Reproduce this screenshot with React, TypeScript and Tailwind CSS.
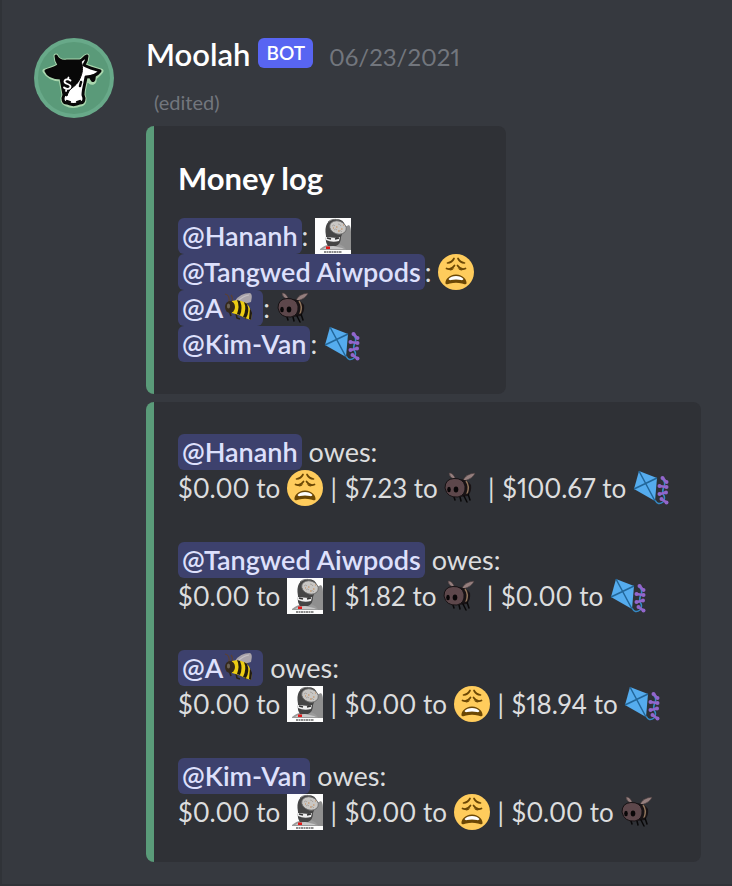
import type { ReactNode } from "react";

function Avatar() {
  return (
    <svg viewBox="0 0 80 80" className="size-20 shrink-0" role="img" aria-label="Moolah avatar">
      <circle cx="40" cy="40" r="40" fill="#68a989" />
      <circle cx="40" cy="40" r="36" fill="#5a9a79" />
      <g strokeLinejoin="round" strokeLinecap="round">
        <path
          d="M22 18 C24 22 28 24 33 23 L46 23 C49 22 50 19 53 18 C53 21 52 24 50 27 C55 30 61 31 67 33 C65 36 62 38 60 40 C61 45 57 46 55 41 L52 40 C51 46 49 51 49 57 C51 61 50 66 46 66 C42 68 36 68 33 66 C29 65 28 61 30 57 C29 51 28 46 27 41 C20 41 14 38 11 33 C17 31 22 30 25 27 C23 24 22 21 22 18Z"
          fill="#a9d6ad"
          stroke="#a9d6ad"
          strokeWidth="5"
        />
        <path
          d="M22 18 C24 22 28 24 33 23 L46 23 C49 22 50 19 53 18 C53 21 52 24 50 27 C55 30 61 31 66 33 C63 37 58 39 52 39 C51 46 49 51 49 57 C51 61 50 65 46 65 C42 67 37 67 33 65 C29 65 28 61 30 57 C29 51 28 46 27 40 C20 40 14 38 12 33 C17 31 22 30 25 27 C23 24 22 21 22 18Z"
          fill="#fff"
          stroke="#080808"
          strokeWidth="3"
        />
        <path
          d="M22 18 C24 22 28 23.500 33 23 L47 23 C49 28 49 33 47 38 C45 44 42 47 38 50 C35 52 34 55 33 58 L30 57 C29 51 28 46 27 40 C20 40 14 38 12 33 C17 31 22 30 25 27 C23 24 22 21 22 18Z"
          fill="#080808"
          stroke="#080808"
          strokeWidth="1"
        />
        <path d="M56 38 L61 37 C61 41 61 44 58 43 C57 42 56 40 56 38Z" fill="#080808" stroke="#080808" strokeWidth="1.500" />
        <path d="M47 44 L46 48" fill="none" stroke="#080808" strokeWidth="2.500" />
        <path d="M33 63 L36 64 M43 64 L46 63" fill="none" stroke="#080808" strokeWidth="2.200" />
        <path
          d="M36.500 42.500 C34.500 40.500 30.500 41 30.500 43.500 C30.500 46.500 36.500 45.500 36.500 48.500 C36.500 51.500 32 51.500 30 49.500 M34.500 39.500 L34 41 M32.500 51 L32 53"
          fill="none"
          stroke="#fff"
          strokeWidth="1.800"
        />
      </g>
    </svg>
  );
}

const emojiClass = "inline-block size-9 align-top";

function Mask() {
  return (
    <svg viewBox="0 0 36 36" className={emojiClass} role="img" aria-label="masked figure">
      <rect width="36" height="36" fill="#fdfdfd" />
      <path d="M27 10 L34 7 Q36 9 36 14 V32 H25 Q22 22 27 10Z" fill="#8f8f8f" />
      <path d="M5 31 Q10 27 13 27 L24 26 Q30 28 31 32 H5Z" fill="#9a9a9a" />
      <path d="M11 18 Q8 2 21 1 Q29 1 30 8 L26 19 Q26 26 21 28 L13 28 Q10 24 11 18Z" fill="#454545" />
      <path d="M13 4 Q17 0 24 2" fill="none" stroke="#777" strokeWidth="1" />
      <ellipse cx="23" cy="9.500" rx="8.500" ry="6.500" transform="rotate(18 23 9.500)" fill="#c9c7c4" stroke="#666" strokeWidth="0.800" />
      <path
        d="M17 8 Q19 6 20 8 M23 6 Q25 6 26 8 M19 12 Q21 10 22 12 M24 13 Q26 12 27 14"
        fill="none"
        stroke="#a19c97"
        strokeWidth="0.800"
      />
      <path d="M21 9h1.500 M26 11h1.500 M23 13h1.500 M28 7h1 M18 10h1" stroke="#c88a52" strokeWidth="1.200" />
      <path d="M11 19 L22 20 L25 19 L24 23 Q17 25 11 22Z" fill="#eee" />
      <path d="M12 20 L16 21 M20 21 L24 20" stroke="#333" strokeWidth="1.400" />
      <path d="M11 29 L18 28 L27 30 L29 31 H8Z" fill="#c7c7c7" />
      <rect x="11" y="28.500" width="4" height="2.500" fill="#e21818" />
      <path d="M9 34h18" stroke="#666" strokeWidth="1.500" strokeDasharray="2 0.500" />
    </svg>
  );
}

function Weary() {
  return (
    <svg viewBox="0 0 36 36" className={emojiClass} role="img" aria-label="weary face">
      <circle cx="18" cy="18" r="18" fill="#ffcc5c" />
      <g fill="none" stroke="#6b4705" strokeWidth="1.700" strokeLinecap="round">
        <path d="M9.500 9 Q14 8.500 16 4.500 M26.500 9 Q22 8.500 20 4.500" />
        <path d="M8.500 14.500 Q13 16.500 16.500 11.500 M27.500 14.500 Q23 16.500 19.500 11.500" />
      </g>
      <path d="M9.500 14.500 Q13 18.500 16.500 14 Q13 16 9.500 14.500Z M26.500 14.500 Q23 18.500 19.500 14 Q23 16 26.500 14.500Z" fill="#6b4705" />
      <path d="M18 20.500 C11 20.500 7 26 7.500 29.500 C8 31 10 30 12 29.500 Q18 28 24 29.500 C26 30 28 31 28.500 29.500 C29 26 25 20.500 18 20.500Z" fill="#6b4705" />
      <path d="M10.500 25 Q13 22 18 22 T25.500 25 Q25 26.500 23 26 Q18 24.800 13 26 Q11 26.500 10.500 25Z" fill="#fff" />
    </svg>
  );
}

function DarkBee() {
  return (
    <svg viewBox="0 0 36 36" className={emojiClass} role="img" aria-label="dark bee">
      <path d="M11 10 Q5 7 5 3 Q9 2 12 10Z" fill="#957f7e" stroke="#443739" strokeWidth="0.600" />
      <path d="M19 10 Q22 4 31 3 Q30 8 20 11Z" fill="#957f7e" stroke="#443739" strokeWidth="0.600" />
      <path d="M15 9 Q23 9 27 15 Q28 21 24 26 L15 27Z" fill="#191315" />
      <path d="M22 11 Q26 16 23 24" fill="none" stroke="#8f745b" strokeWidth="1.500" />
      <path d="M10 27 L11 30 M16 27 L17 31 M20 26 L23 32 M24 24 L26 30" fill="none" stroke="#090809" strokeWidth="1.500" strokeLinecap="round" />
      <path d="M1 18 Q1 9 10 8.500 Q19 8 21 16 Q22 25 14 27 Q3 28 1 18Z" fill="#5d474b" stroke="#171214" strokeWidth="1" />
      <ellipse cx="5" cy="19.500" rx="1.800" ry="2.800" fill="#080607" />
      <ellipse cx="12" cy="19.500" rx="2.300" ry="3" fill="#080607" />
    </svg>
  );
}

function Kite() {
  return (
    <svg viewBox="0 0 36 36" className={emojiClass} role="img" aria-label="kite">
      <path d="M22 30 Q25 36 30 32 Q33 28 30 24 Q29 20 31 17 Q33 12 29 9" fill="none" stroke="#3589c5" strokeWidth="1.500" />
      <path d="M6 1 L24 8 L22 31 L1 19Z" fill="#55acee" />
      <path d="M6 1 L22 31 M24 8 L1 19" fill="none" stroke="#226699" strokeWidth="1.500" />
      <g stroke="#9266cc" strokeWidth="2.600">
        <path d="M30 8 L33 12 M26.500 16 L33 17 M27 24 L33 22.500 M28.500 29 L33.500 32.500" />
      </g>
      <g fill="#9266cc">
        <circle cx="29.500" cy="8" r="2" />
        <circle cx="33.500" cy="12" r="2" />
        <circle cx="26.500" cy="16" r="2" />
        <circle cx="33.500" cy="17" r="2" />
        <circle cx="26.500" cy="24" r="2" />
        <circle cx="33" cy="22.500" r="2" />
        <circle cx="28.500" cy="29" r="2" />
        <circle cx="33.500" cy="32.500" r="2" />
      </g>
    </svg>
  );
}

function Bee() {
  return (
    <svg viewBox="0 0 36 36" className={emojiClass} role="img" aria-label="bee">
      <path d="M6 12 Q7 5 2 4 M9 11 Q10 7 8 5" fill="none" stroke="#5b4034" strokeWidth="1.200" />
      <path d="M12 11 Q17 3 27 3 Q30 4 28 12 Q24 14 14 13Z" fill="#aaa4aa" />
      <path d="M15 11 Q20 6 26 5" fill="none" stroke="#c6c0c5" strokeWidth="1.200" />
      <path d="M6 20 L8 26 M13 23 L14 28 L17 29 M21 24 L23 29" fill="none" stroke="#2d2412" strokeWidth="1.600" />
      <path d="M9 11 Q16 9 23 13 Q30 19 28 30 Q21 28 16 25 L9 23Z" fill="#edcd13" />
      <path d="M14 10 Q17 16 14 24 L17 25 Q20 18 17 11Z M21 12 Q24 19 20 27 L23 28 Q27 21 24 14Z M27 18 L29 23 L28 30 L26 29Z" fill="#211b10" />
      <ellipse cx="7" cy="17" rx="5" ry="6" fill="#352a1d" />
      <ellipse cx="5.500" cy="16" rx="1.600" ry="2.600" fill="#6b6255" />
    </svg>
  );
}

function Mention({ children }: { children: ReactNode }) {
  return (
    <a href="#" className="inline-block h-9 rounded-md bg-[#3d416d] px-1 align-top font-semibold text-[#dee0fc]">
      {children}
    </a>
  );
}

function Embed({ children }: { children: ReactNode }) {
  return (
    <article className="w-fit rounded-lg border-l-8 border-[#5a9b79] bg-[#2f3136] py-8 pr-8 pl-6 text-[27px] leading-9 whitespace-nowrap text-[#dcddde] proportional-nums">
      {children}
    </article>
  );
}

const hananh = "@Hananh";
const tangwed = "@Tangwed Aiwpods";
const kim = "@Kim-Van";
const a = (
  <>
    @A
    <Bee />
  </>
);

const debts = [
  { who: hananh, owes: [["$0.00", <Weary />], ["$7.23", <DarkBee />], ["$100.67", <Kite />]] },
  { who: tangwed, owes: [["$0.00", <Mask />], ["$1.82", <DarkBee />], ["$0.00", <Kite />]] },
  { who: a, owes: [["$0.00", <Mask />], ["$0.00", <Weary />], ["$18.94", <Kite />]] },
  { who: kim, owes: [["$0.00", <Mask />], ["$0.00", <Weary />], ["$0.00", <DarkBee />]] },
];

export default function App() {
  return (
    <main className="flex min-h-screen gap-8 border-b-2 border-l-2 border-[#303338] bg-[#36393f] pt-[34px] pr-7 pb-[22px] pl-8 font-['Lato','Noto_Sans',sans-serif]">
      <div className="pt-1">
        <Avatar />
      </div>
      <div className="min-w-0">
        <header className="flex h-11 items-baseline leading-10">
          <h1 className="text-[31px] font-semibold text-white">Moolah</h1>
          <span className="mt-1 ml-2 self-start rounded-md bg-[#5865f2] px-2 text-[19px] leading-[30px] font-semibold text-white">BOT</span>
          <time className="ml-4 text-[24px] text-[#72767d] proportional-nums">06/23/2021</time>
        </header>
        <p className="h-12 pl-2 text-[20px] leading-12 text-[#72767d]">(edited)</p>
        <div className="flex flex-col gap-2">
          <Embed>
            <h2 className="mb-5 text-[31px] leading-10 font-bold text-white">Money log</h2>
            <p><Mention>{hananh}</Mention>: <Mask /></p>
            <p><Mention>{tangwed}</Mention>: <Weary /></p>
            <p><Mention>{a}</Mention>: <DarkBee /></p>
            <p><Mention>{kim}</Mention>: <Kite /></p>
          </Embed>
          <Embed>
            <div className="flex flex-col gap-9">
              {debts.map((debt, row) => (
                <section key={row}>
                  <p><Mention>{debt.who}</Mention> owes:</p>
                  <p className="text-[26px]">
                    {debt.owes.map(([amount, emoji], i) => (
                      <span key={i}>
                        {i > 0 && <span className="mx-px"> | </span>}
                        {amount} to {emoji}
                      </span>
                    ))}
                  </p>
                </section>
              ))}
            </div>
          </Embed>
        </div>
      </div>
    </main>
  );
}
